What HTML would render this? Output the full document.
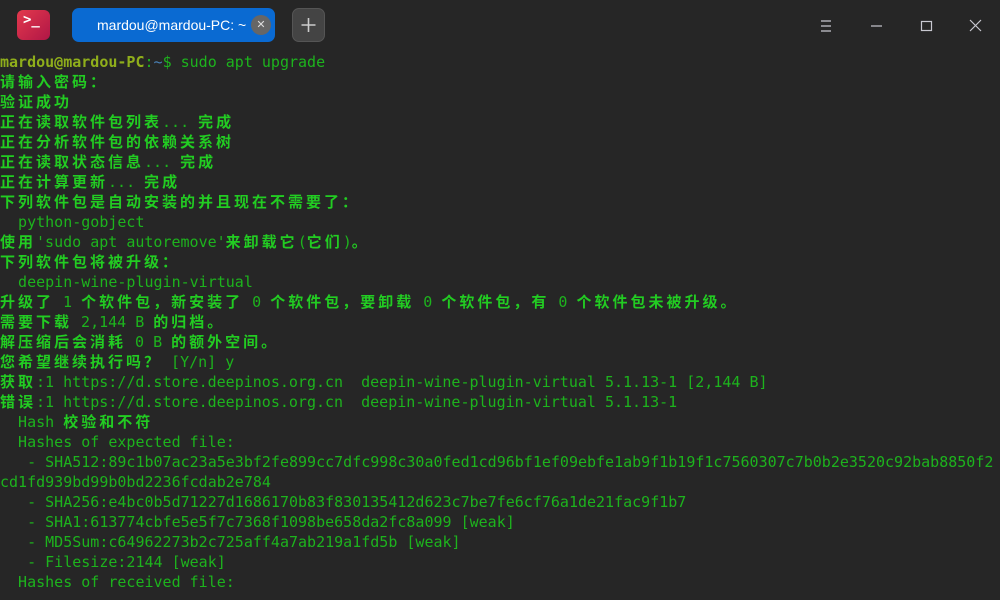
<!DOCTYPE html>
<html><head><meta charset="utf-8">
<style>
html,body{margin:0;padding:0;background:#262626;width:1000px;height:600px;overflow:hidden}
.top{position:absolute;left:0;top:0;width:1000px;height:50px;background:#262626}
.logo{position:absolute;left:17px;top:10px;width:33px;height:30px;border-radius:6px;background:linear-gradient(135deg,#e3394d,#b01646)}
.logo span{position:absolute;left:6px;top:2px;color:#fff;font:bold 14px "DejaVu Sans Mono",monospace}
.tab{position:absolute;left:72px;top:8px;width:203px;height:34px;border-radius:7px;background:#0a6ad2;color:#fff;font:14px "Liberation Sans","DejaVu Sans",sans-serif;line-height:34px;overflow:hidden}
.tab .t{position:absolute;left:25px;white-space:nowrap}
.tab .x{position:absolute;right:4px;top:7px;width:20px;height:20px;border-radius:50%;background:#666;color:#ddd;font-size:11px;line-height:20px;text-align:center}
.plus{position:absolute;left:292px;top:8px;width:33px;height:34px;border-radius:7px;background:#444;border:1px solid #555;box-sizing:border-box}
.term{position:absolute;left:0;top:52px;font:15px/20px "DejaVu Sans Mono","Noto Sans CJK SC",monospace;color:#1db31d}
.term div{height:20px;white-space:pre}
b{font-family:"Noto Sans CJK SC","WenQuanYi Zen Hei",sans-serif;font-weight:bold;letter-spacing:3px;color:#22cc22;font-size:15px}
.u{color:#8fae1b;font-weight:bold}
.d{color:#4a80b5}
</style></head><body>
<div class="top">
<div class="logo"><span>&gt;_</span></div>
<div class="tab"><span class="t">mardou@mardou-PC: ~</span><span class="x">✕</span></div>
<div class="plus"><svg width="33" height="34" style="position:absolute;left:-1px;top:-1px"><path d="M16.5 10v14M9.5 17h14" stroke="#ccc" stroke-width="1.6"/></svg></div>
<svg width="1000" height="50" style="position:absolute;left:0;top:0">
<path d="M821 21h10M821 26h10M821 31h10" stroke="#c8c8d0" stroke-width="1.2"/>
<path d="M871 26h11" stroke="#c8c8d0" stroke-width="1.2"/>
<rect x="921.5" y="21.5" width="10" height="9" fill="none" stroke="#c8c8d0" stroke-width="1.2"/>
<path d="M970 20l11 11M981 20l-11 11" stroke="#c8c8d0" stroke-width="1.2"/>
</svg>
</div>
<div class="term"><div><span class="u">mardou@mardou-PC</span>:<span class="d">~</span>$ sudo apt upgrade</div><div><b>请输入密码：</b></div><div><b>验证成功</b></div><div><b>正在读取软件包列表</b>... <b>完成</b></div><div><b>正在分析软件包的依赖关系树</b></div><div><b>正在读取状态信息</b>... <b>完成</b></div><div><b>正在计算更新</b>... <b>完成</b></div><div><b>下列软件包是自动安装的并且现在不需要了：</b></div><div>  python-gobject</div><div><b>使用</b>'sudo apt autoremove'<b>来卸载它</b>(<b>它们</b>)<b>。</b></div><div><b>下列软件包将被升级：</b></div><div>  deepin-wine-plugin-virtual</div><div><b>升级了</b> 1 <b>个软件包，新安装了</b> 0 <b>个软件包，要卸载</b> 0 <b>个软件包，有</b> 0 <b>个软件包未被升级。</b></div><div><b>需要下载</b> 2,144 B <b>的归档。</b></div><div><b>解压缩后会消耗</b> 0 B <b>的额外空间。</b></div><div><b>您希望继续执行吗？</b> [Y/n] y</div><div><b>获取</b>:1 https://d.store.deepinos.org.cn  deepin-wine-plugin-virtual 5.1.13-1 [2,144 B]</div><div><b>错误</b>:1 https://d.store.deepinos.org.cn  deepin-wine-plugin-virtual 5.1.13-1</div><div>  Hash <b>校验和不符</b></div><div>  Hashes of expected file:</div><div>   - SHA512:89c1b07ac23a5e3bf2fe899cc7dfc998c30a0fed1cd96bf1ef09ebfe1ab9f1b19f1c7560307c7b0b2e3520c92bab8850f2</div><div>cd1fd939bd99b0bd2236fcdab2e784</div><div>   - SHA256:e4bc0b5d71227d1686170b83f830135412d623c7be7fe6cf76a1de21fac9f1b7</div><div>   - SHA1:613774cbfe5e5f7c7368f1098be658da2fc8a099 [weak]</div><div>   - MD5Sum:c64962273b2c725aff4a7ab219a1fd5b [weak]</div><div>   - Filesize:2144 [weak]</div><div>  Hashes of received file:</div></div>
</body></html>
